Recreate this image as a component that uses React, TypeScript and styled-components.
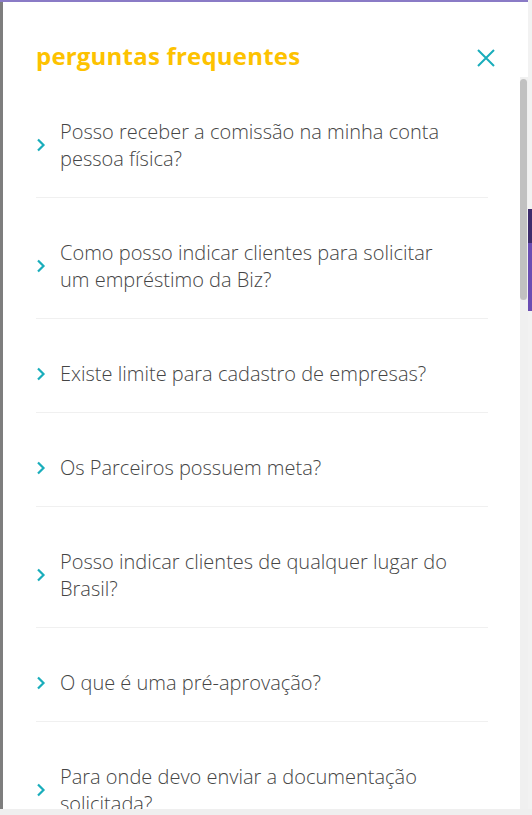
import React from "react";
import styled, { createGlobalStyle } from "styled-components";

const GlobalStyle = createGlobalStyle`
  html, body {
    margin: 0;
    padding: 0;
    width: 532px;
    height: 815px;
    overflow: hidden;
    font-family: "Open Sans", "Noto Sans", sans-serif;
  }
  * { box-sizing: border-box; }
`;

const Screen = styled.div`
  width: 532px;
  height: 815px;
  display: flex;
  flex-direction: column;
  background: #f1f1f1;
`;

const Body = styled.div`
  flex: 1;
  min-height: 0;
  display: flex;
`;

const Stage = styled.div`
  width: 528px;
  display: flex;
  flex-direction: column;
`;

const TopLine = styled.div`
  height: 2px;
  background: #8a7bc6;
`;

const Row = styled.div`
  flex: 1;
  min-height: 0;
  display: flex;
`;

const Backdrop = styled.div`
  width: 3px;
  background: #7e7e7e;
`;

const Drawer = styled.aside`
  flex: 1;
  min-width: 0;
  background: #ffffff;
  display: flex;
  flex-direction: column;
`;

const Header = styled.header`
  height: 75px;
  padding: 33px 33px 0 33px;
  display: flex;
  align-items: center;
  justify-content: space-between;
`;

const Title = styled.h2`
  margin: 0;
  font-size: 24px;
  line-height: 30px;
  font-weight: 700;
  color: #fdc200;
  letter-spacing: 0.2px;
`;

const CloseButton = styled.button`
  border: 0;
  background: transparent;
  padding: 0;
  margin-top: 4px;
  width: 18px;
  height: 18px;
  display: flex;
  cursor: pointer;
`;

const Content = styled.div`
  flex: 1;
  min-height: 0;
  display: flex;
`;

const List = styled.div`
  flex: 1;
  min-width: 0;
  overflow: hidden;
  padding: 0 32px 0 33px;
`;

const ScrollTrack = styled.div`
  width: 8px;
  background: #f0f0f0;
  padding: 2px 1px 0 0;
  display: flex;
  flex-direction: column;
`;

const ScrollThumb = styled.div`
  height: 221px;
  border-radius: 4px;
  background: #c1c1c1;
`;

const Item = styled.div`
  display: flex;
  align-items: center;
  gap: 14px;
  padding: 41px 0 25px;
  border-bottom: 1px solid #f0f0f0;
`;

const Chevron = styled.svg`
  flex: none;
  width: 10px;
  height: 14px;
`;

const Question = styled.span`
  font-size: 20px;
  line-height: 27px;
  font-weight: 300;
  color: #454545;
  max-width: 400px;
`;

const RightEdge = styled.div`
  flex: 1;
  background: #f2f2f2;
  display: flex;
  flex-direction: column;
  padding-top: 209px;
`;

const PageBlock = styled.div<{ $tone: string; $h: number }>`
  height: ${(p) => p.$h}px;
  background: ${(p) => p.$tone};
`;

const BottomBar = styled.div`
  height: 6px;
  background: #efefef;
`;

const questions = [
  "Posso receber a comissão na minha conta pessoa física?",
  "Como posso indicar clientes para solicitar um empréstimo da Biz?",
  "Existe limite para cadastro de empresas?",
  "Os Parceiros possuem meta?",
  "Posso indicar clientes de qualquer lugar do Brasil?",
  "O que é uma pré-aprovação?",
  "Para onde devo enviar a documentação solicitada?",
  "Como acompanho o status das minhas indicações?",
];

export default function App() {
  return (
    <>
      <GlobalStyle />
      <Screen>
        <Body>
          <Stage>
            <TopLine />
            <Row>
              <Backdrop />
              <Drawer>
                <Header>
                  <Title>perguntas frequentes</Title>
                  <CloseButton aria-label="Fechar">
                    <svg width="18" height="18" viewBox="0 0 18 18">
                      <path
                        d="M1 1 L17 17 M17 1 L1 17"
                        stroke="#19adbb"
                        strokeWidth="2"
                        fill="none"
                      />
                    </svg>
                  </CloseButton>
                </Header>
                <Content>
                  <List>
                    {questions.map((q) => (
                      <Item key={q}>
                        <Chevron viewBox="0 0 10 14">
                          <path
                            d="M2 1.5 L7.5 7 L2 12.5"
                            stroke="#19adbb"
                            strokeWidth="2.2"
                            fill="none"
                          />
                        </Chevron>
                        <Question>{q}</Question>
                      </Item>
                    ))}
                  </List>
                  <ScrollTrack>
                    <ScrollThumb />
                  </ScrollTrack>
                </Content>
              </Drawer>
            </Row>
          </Stage>
          <RightEdge>
            <PageBlock $tone="#3d2c6c" $h={34} />
            <PageBlock $tone="#6a4db3" $h={68} />
          </RightEdge>
        </Body>
        <BottomBar />
      </Screen>
    </>
  );
}
